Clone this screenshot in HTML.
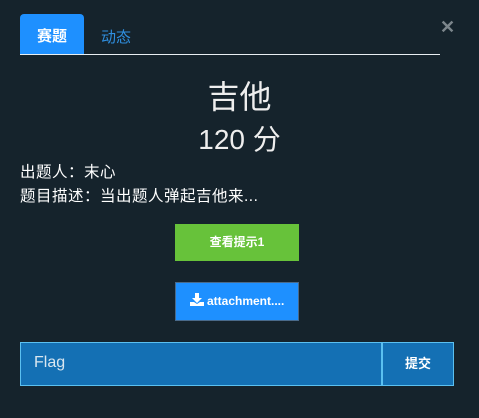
<!DOCTYPE html>
<html><head><meta charset="utf-8"><style>
body{margin:0;width:479px;height:418px;background:#15232c;font-family:"Liberation Sans","Noto Sans CJK SC",sans-serif;position:relative;overflow:hidden;color:#fff}
.a{position:absolute}
</style></head><body>
<div class="a" style="left:20px;top:14px;width:64px;height:41px;background:#1e90ff;border-radius:4px 4px 0 0"></div>
<div class="a" style="left:20px;top:25px;width:64px;text-align:center;font-size:15px;font-weight:bold">赛题</div>
<div class="a" style="left:101px;top:26px;font-size:15px;color:#2f8fe0">动态</div>
<div class="a" style="left:20px;top:54px;width:420px;height:1px;background:#e8eef2"></div>
<div class="a" style="left:440px;top:17px;font-size:18px;font-weight:bold;color:#7c868c">✕</div>
<div class="a" style="left:0;top:72px;width:479px;text-align:center;font-size:32px;color:#eee">吉他</div>
<div class="a" style="left:0;top:118px;width:479px;text-align:center;font-size:28px;color:#eee">120 分</div>
<div class="a" style="left:20px;top:161px;font-size:15.5px;line-height:24px;letter-spacing:0.5px">出题人：末心<br>题目描述：当出题人弹起吉他来...</div>
<div class="a" style="left:175px;top:224px;width:124px;height:37px;background:#67c23a;font-size:12px;font-weight:bold;text-align:center;line-height:37px">查看提示1</div>
<div class="a" style="left:175px;top:282px;width:122px;height:37px;background:#1e90ff;border:1px solid #4a6a8a;font-size:12px;font-weight:bold;text-align:center;line-height:37px"><svg width="14" height="13" viewBox="0 0 14 13" style="vertical-align:-1px"><path d="M5 0h4v5h3l-5 5-5-5h3z M0 9h4l3 2 3-2h4v4H0z" fill="#fff"/></svg> attachment....</div>
<div class="a" style="left:20px;top:342px;width:360px;height:42px;background:#1470b4;border:1px solid #5bc0f0"></div>
<div class="a" style="left:34px;top:354px;font-size:16px;color:#d8e6f0">Flag</div>
<div class="a" style="left:382px;top:342px;width:70px;height:42px;background:#1470b4;border:1px solid #5bc0f0;text-align:center;line-height:42px;font-size:13px;font-weight:bold">提交</div>
</body></html>
